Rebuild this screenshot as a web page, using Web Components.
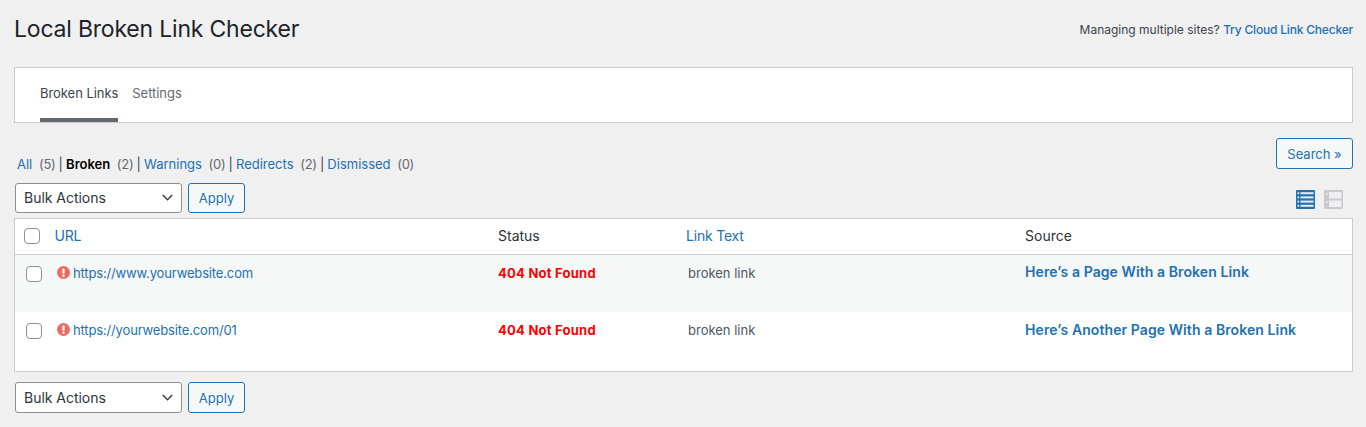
<!DOCTYPE html>
<html lang="en"><head><meta charset="utf-8"><title>Local Broken Link Checker</title>
<style>
html,body{margin:0;padding:0;background:#f0f0f1;height:427px;overflow:hidden}
body{font-family:Inter,"Liberation Sans",sans-serif;font-size:14px;color:#3c434a}
</style></head><body>
<blc-page>
  <blc-header></blc-header>
  <blc-tabs></blc-tabs>
  <blc-toolbar></blc-toolbar>
  <blc-table>
    <blc-row url="https://www.yourwebsite.com" text="broken link" source="Here’s a Page With a Broken Link" alt></blc-row>
    <blc-row url="https://yourwebsite.com/01" text="broken link" source="Here’s Another Page With a Broken Link"></blc-row>
  </blc-table>
  <blc-bulk class="bottom"></blc-bulk>
</blc-page>
<script>
const base=`*{box-sizing:border-box}:host{box-sizing:border-box}a{color:#2271b1;text-decoration:none}`;
function def(name,html){customElements.define(name,class extends HTMLElement{
  connectedCallback(){if(this.shadowRoot)return;const r=this.attachShadow({mode:'open'});
    r.innerHTML='<style>'+base+'</style>'+(typeof html==='function'?html(this):html);}
});}
def('blc-page',`<style>:host{display:block;padding:0 13px 0 14px}
::slotted(blc-bulk.bottom){margin-top:10px;margin-left:1px}</style><slot></slot>`);
def('blc-header',`<style>:host{display:flex;justify-content:space-between;align-items:center;height:58px}
h1{margin:0;font-size:23px;font-weight:400;color:#1d2327;letter-spacing:-.2px;line-height:30px}
p{margin:0;font-size:12px;color:#3c434a}a{font-weight:500;letter-spacing:-.19px}</style>
<h1>Local Broken Link Checker</h1><p>Managing multiple sites? <a href="#">Try Cloud Link Checker</a></p>`);
def('blc-tabs',`<style>:host{display:flex;margin-top:9px;height:56px;background:#fff;border:1px solid #c9cbcd;padding-left:25px;gap:14px}
a{display:block;height:54px;padding-top:17px;font-size:13px;line-height:16px;color:#646970;letter-spacing:-.05px}
a.on{color:#3c434a;border-bottom:4px solid #646970}</style>
<a class="on" href="#">Broken Links</a><a href="#">Settings</a>`);
def('blc-toolbar',`<style>:host{display:grid;grid-template-columns:1fr auto;grid-template-rows:60px 35px;height:95px}
.filters{padding:33px 0 0 3px;font-size:13px;line-height:16px;color:#646970;white-space:nowrap;grid-column:1}
.filters b{color:#000;font-weight:600}.sep{color:#3c434a;margin:0 -.5px}
.n{margin-left:3px;letter-spacing:-.3px}
.right{grid-column:2;grid-row:1/3;display:flex;flex-direction:column;align-items:flex-end;padding-top:15px}
.search{height:31px;width:77px;border:1px solid #2271b1;border-radius:3px;background:#f6f7f7;color:#2271b1;font-size:13px;display:flex;align-items:center;justify-content:center}
.views{display:flex;gap:9px;margin-top:21px;margin-right:10px}
blc-bulk{grid-column:1;grid-row:2;margin-left:1px}
svg{display:block}</style>
<div class="filters"><a href="#">All</a> <span class="n">(5)</span> <span class="sep">|</span> <b>Broken</b> <span class="n">(2)</span> <span class="sep">|</span> <a href="#">Warnings</a> <span class="n">(0)</span> <span class="sep">|</span> <a href="#">Redirects</a> <span class="n">(2)</span> <span class="sep">|</span> <a href="#">Dismissed</a> <span class="n">(0)</span></div>
<blc-bulk></blc-bulk>
<div class="right"><a class="search" href="#">Search »</a>
<div class="views">
<svg width="19" height="19" viewBox="0 0 19 19"><rect width="19" height="19" rx="1" fill="#2271b1"/><g fill="#e2eef7"><rect x="1.5" y="2.2" width="1.6" height="2"/><rect x="1.5" y="6.4" width="1.6" height="2"/><rect x="1.5" y="10.6" width="1.6" height="2"/><rect x="1.5" y="14.8" width="1.6" height="2"/><rect x="4.5" y="2.2" width="13" height="2"/><rect x="4.5" y="6.4" width="13" height="2"/><rect x="4.5" y="10.6" width="13" height="2"/><rect x="4.5" y="14.8" width="13" height="2"/></g></svg>
<svg width="19" height="19" viewBox="0 0 19 19"><rect width="19" height="19" rx="1" fill="#c8c9ca"/><g fill="#eeeeef"><rect x="5" y="2" width="12.5" height="6.5"/><rect x="5" y="10.5" width="12.5" height="6.5"/></g><rect x="2" y="3" width="1.6" height="1.6" fill="#eeeeef"/><rect x="2" y="11.5" width="1.6" height="1.6" fill="#eeeeef"/></svg>
</div></div>`);
def('blc-bulk',`<style>:host{display:flex;gap:6px;height:31px}
.sel{width:167px;height:31px;border:1px solid #8c8f94;border-radius:3px;background:#fff;color:#2c3338;font-size:14px;letter-spacing:-.03px;display:flex;align-items:center;justify-content:space-between;padding:0 8px}
.ap{width:57px;height:31px;border:1px solid #2271b1;border-radius:3px;background:#f6f7f7;color:#2271b1;font-size:13px;display:flex;align-items:center;justify-content:center}
:host(:not(.bottom)) .sel,:host(:not(.bottom)) .ap{height:30px;padding-bottom:1px}
svg{display:block}</style>
<div class="sel"><span>Bulk Actions</span><svg width="11" height="7" viewBox="0 0 11 7"><path d="M.8 1 5.5 5.7 10.2 1" fill="none" stroke="#3c434a" stroke-width="1.6"/></svg></div><a class="ap" href="#">Apply</a>`);
def('blc-check',`<style>:host{display:block;width:16px;height:16px;border:1px solid #8c8f94;border-radius:4px;background:#fff}</style>`);
const cols=`display:grid;grid-template-columns:40px 443px 188px 339px 1fr`;
def('blc-table',`<style>:host{display:block;border:1px solid #c9cbcd;background:#fff;height:154px}
.head{${cols};height:36px;padding-bottom:1px;border-bottom:1px solid #c9cbcd;font-size:14px;line-height:16px;color:#2c3338;align-items:center}
.head a{letter-spacing:-.2px}.head a:first-of-type{margin-left:-.5px}
blc-check{margin-left:8.5px}</style>
<div class="head"><blc-check></blc-check><a href="#">URL</a><span>Status</span><a href="#">Link Text</a><span>Source</span></div><slot></slot>`);
def('blc-row',el=>`<style>:host{${cols};height:57px;background:#fff;font-size:13px;line-height:16px}
:host([alt]){background:#f6f7f7}
:host(:last-child){height:59px}
blc-check{margin:11px 0 0 11px}
.u{padding-top:10px;display:flex;align-items:flex-start;gap:3px;margin-left:2px}
.u svg{display:block;flex:none;margin-top:1px}
.u a{letter-spacing:-.15px}
.st{padding-top:10px;color:#f00;font-weight:700;letter-spacing:.24px}
.tx{padding-top:10px;padding-left:2px;color:#50575e}
.src{padding-top:9px;font-size:14px;font-weight:600;letter-spacing:.09px}
:host(:last-child) .src{padding-top:10px}</style>
<blc-check></blc-check>
<div class="u"><svg width="13" height="13" viewBox="0 0 13 13"><circle cx="6.5" cy="6.5" r="6.5" fill="#f0695f"/><rect x="5.4" y="2.4" width="2.2" height="5.4" rx=".9" fill="#fff"/><circle cx="6.5" cy="9.7" r="1.2" fill="#fff"/></svg><a href="#">${el.getAttribute('url')}</a></div>
<div class="st">404 Not Found</div><div class="tx">${el.getAttribute('text')}</div><div class="src"><a href="#">${el.getAttribute('source')}</a></div>`);
</script></body></html>
